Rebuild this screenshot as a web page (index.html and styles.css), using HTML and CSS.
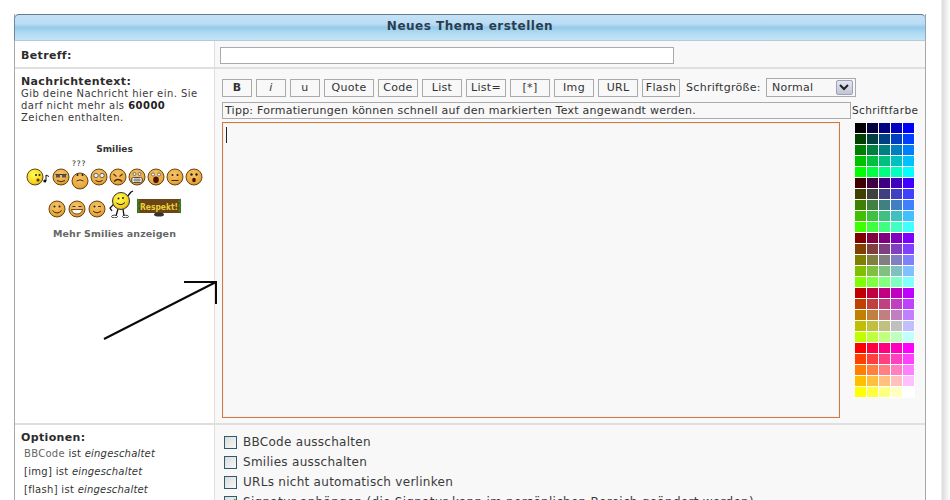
FILE: index.html
```html
<!DOCTYPE html>
<html lang="de">
<head>
<meta charset="utf-8">
<title>Neues Thema erstellen</title>
<link rel="stylesheet" href="styles.css">
</head>
<body>
<div class="page">
  <main class="panel">
    <h1 class="title">Neues Thema erstellen</h1>
    <section class="row row-subject">
      <div class="side"><strong class="label">Betreff:</strong></div>
      <div class="main main-subject"><input class="subject" type="text"></div>
    </section>
    <section class="row row-message">
      <div class="side">
        <strong class="label">Nachrichtentext:</strong>
        <p class="hint">Gib deine Nachricht hier ein. Sie darf nicht mehr als <b>60000</b> Zeichen enthalten.</p>
        <h2 class="smilies-title">Smilies</h2>
        <div class="smilies">
          <svg class="s s-wide" viewBox="0 0 25 18"><circle cx="9" cy="9" r="8" fill="url(#yl)" stroke="#5b4a10"/><circle cx="10" cy="7" r="1" fill="#222"/><circle cx="13.500" cy="7" r="1" fill="#222"/><circle cx="12" cy="12" r="1.500" fill="#4a3500"/><path d="M20 7v6" stroke="#111" stroke-width="1"/><path d="M20 7l3 1.500" stroke="#111"/><circle cx="18.800" cy="13" r="1.500" fill="#111"/></svg>
          <svg class="s" viewBox="0 0 18 18"><use href="#face"/><path d="M3.500 6.500h11" stroke="#333"/><rect x="4" y="6.500" width="4" height="3" fill="#555"/><rect x="10" y="6.500" width="4" height="3" fill="#555"/><path d="M5 12.500q4 2.500 8 0" stroke="#4a2b00" fill="none"/></svg>
          <svg class="s s-tall" viewBox="0 0 18 26"><text x="1" y="6" class="qm">???</text><g transform="translate(0 8)"><use href="#face"/><circle cx="6.500" cy="7" r="1" fill="#222"/><circle cx="11.500" cy="7" r="1" fill="#222"/><path d="M5.500 13q3.500-2.500 7 0" stroke="#4a2b00" fill="none"/></g></svg>
          <svg class="s" viewBox="0 0 18 18"><use href="#face"/><circle cx="6" cy="7.500" r="2.200" fill="#eee" stroke="#333" stroke-width=".7"/><circle cx="12" cy="7.500" r="2.200" fill="#eee" stroke="#333" stroke-width=".7"/><path d="M5.500 12.500q3.500 2.500 7 0" stroke="#4a2b00" fill="none"/></svg>
          <svg class="s" viewBox="0 0 18 18"><use href="#face"/><path d="M4.500 6l3 2.500M13.500 6l-3 2.500" stroke="#5a2f00" stroke-width="1.200"/><path d="M5 13.500q4-4 8 0" stroke="#4a2b00" fill="none" stroke-width="1.200"/></svg>
          <svg class="s" viewBox="0 0 18 18"><use href="#face"/><circle cx="6.500" cy="6" r="1.500" fill="#eee" stroke="#333" stroke-width=".6"/><circle cx="11.500" cy="6" r="1.500" fill="#eee" stroke="#333" stroke-width=".6"/><rect x="3.500" y="9.500" width="11" height="5" rx="2" fill="#fff" stroke="#333" stroke-width=".8"/><path d="M7 9.500v5M9 9.500v5M11 9.500v5M3.500 12h11" stroke="#333" stroke-width=".6"/></svg>
          <svg class="s" viewBox="0 0 18 18"><use href="#face"/><circle cx="6" cy="6.500" r="1.500" fill="#fff" stroke="#333" stroke-width=".6"/><circle cx="12" cy="6.500" r="1.500" fill="#fff" stroke="#333" stroke-width=".6"/><ellipse cx="9" cy="11.800" rx="2.800" ry="3.300" fill="#4a1500"/></svg>
          <svg class="s" viewBox="0 0 18 18"><use href="#face"/><circle cx="6.500" cy="7" r="1" fill="#222"/><circle cx="11.500" cy="7" r="1" fill="#222"/><path d="M5.500 12.500h7" stroke="#4a2b00"/></svg>
          <svg class="s" viewBox="0 0 18 18"><use href="#face"/><circle cx="6.500" cy="6.500" r="1.200" fill="#222"/><circle cx="11.500" cy="6.500" r="1.200" fill="#222"/><ellipse cx="9" cy="12" rx="1.800" ry="2.300" fill="#4a1500"/></svg>
        </div>
        <div class="smilies smilies-second">
          <svg class="s" viewBox="0 0 18 18"><use href="#face"/><circle cx="6.500" cy="6.500" r="1" fill="#222"/><circle cx="11.500" cy="6.500" r="1" fill="#222"/><path d="M4.500 10.500q4.500 5 9 0" stroke="#4a2b00" fill="none"/></svg>
          <svg class="s" viewBox="0 0 18 18"><use href="#face"/><path d="M4.500 6.500h3M10.500 6.500h3" stroke="#333"/><path d="M3.500 9.500h11q-1 4.500-5.500 4.500t-5.500-4.500z" fill="#fff" stroke="#4a2b00" stroke-width=".8"/></svg>
          <svg class="s" viewBox="0 0 18 18"><use href="#face"/><circle cx="6.500" cy="6.500" r="1" fill="#222"/><path d="M10 6.500h3" stroke="#333"/><path d="M5 11q4 3.500 8 0" stroke="#4a2b00" fill="none"/></svg>
          <svg class="dancer" viewBox="0 0 26 28"><path d="M7 13L2 18l2 3M19 7l4-5M23 2l2-1" stroke="#111" fill="none" stroke-width="1.300"/><path d="M10 19l-2 7M15 19l1 7" stroke="#111" stroke-width="1.300"/><ellipse cx="6.500" cy="26.500" rx="3" ry="1.300" fill="#fff" stroke="#111" stroke-width=".8"/><ellipse cx="17.500" cy="26.500" rx="3" ry="1.300" fill="#fff" stroke="#111" stroke-width=".8"/><circle cx="13" cy="11" r="8.500" fill="url(#yl)" stroke="#333"/><circle cx="10.500" cy="8.500" r="1" fill="#222"/><circle cx="15" cy="8" r="1" fill="#222"/><path d="M8.500 13q4.500 3.500 8.500-.5" stroke="#222" fill="none"/></svg>
          <svg class="sign" viewBox="0 0 44 19"><rect x="0" y="1" width="44" height="14" fill="#6b4516"/><path d="M0 1l2 2-2 2 2 3-2 2 2 3-2 2M44 1l-2 2 2 2-2 3 2 2-2 3 2 2" stroke="#2f8a2a" fill="none" stroke-width="1.500"/><ellipse cx="22" cy="16.500" rx="5" ry="2" fill="#333"/><text x="3" y="12" textLength="38" lengthAdjust="spacingAndGlyphs" class="respekt">Respekt!</text></svg>
        </div>
        <div class="more">Mehr Smilies anzeigen</div>
      </div>
      <div class="main main-message">
        <div class="toolbar">
          <button class="btn btn-b" type="button">B</button>
          <button class="btn btn-s btn-i" type="button">i</button>
          <button class="btn btn-s" type="button">u</button>
          <button class="btn btn-quote" type="button">Quote</button>
          <button class="btn" type="button">Code</button>
          <button class="btn" type="button">List</button>
          <button class="btn" type="button">List=</button>
          <button class="btn" type="button">[*]</button>
          <button class="btn" type="button">Img</button>
          <button class="btn" type="button">URL</button>
          <button class="btn btn-flash" type="button">Flash</button>
          <span class="size-label">Schriftgröße:</span>
          <div class="select"><span>Normal</span><span class="arrow"><svg viewBox="0 0 10 7" width="10" height="7"><path d="M1 1l4 4 4-4" fill="none" stroke="#222" stroke-width="2"/></svg></span></div>
        </div>
        <div class="tip-row">
          <div class="tip">Tipp: Formatierungen können schnell auf den markierten Text angewandt werden.</div>
          <span class="color-label">Schriftfarbe</span>
        </div>
        <div class="editor">
          <div class="textarea"><span class="caret"></span></div>
          <div class="palette">
            <span style="background:#000000"></span><span style="background:#000040"></span><span style="background:#000080"></span><span style="background:#0000c0"></span><span style="background:#0000ff"></span>
            <span style="background:#004000"></span><span style="background:#004040"></span><span style="background:#004080"></span><span style="background:#0040c0"></span><span style="background:#0040ff"></span>
            <span style="background:#008000"></span><span style="background:#008040"></span><span style="background:#008080"></span><span style="background:#0080c0"></span><span style="background:#0080ff"></span>
            <span style="background:#00c000"></span><span style="background:#00c040"></span><span style="background:#00c080"></span><span style="background:#00c0c0"></span><span style="background:#00c0ff"></span>
            <span style="background:#00ff00"></span><span style="background:#00ff40"></span><span style="background:#00ff80"></span><span style="background:#00ffc0"></span><span style="background:#00ffff"></span>
            <span style="background:#400000"></span><span style="background:#400040"></span><span style="background:#400080"></span><span style="background:#4000c0"></span><span style="background:#4000ff"></span>
            <span style="background:#404000"></span><span style="background:#404040"></span><span style="background:#404080"></span><span style="background:#4040c0"></span><span style="background:#4040ff"></span>
            <span style="background:#408000"></span><span style="background:#408040"></span><span style="background:#408080"></span><span style="background:#4080c0"></span><span style="background:#4080ff"></span>
            <span style="background:#40c000"></span><span style="background:#40c040"></span><span style="background:#40c080"></span><span style="background:#40c0c0"></span><span style="background:#40c0ff"></span>
            <span style="background:#40ff00"></span><span style="background:#40ff40"></span><span style="background:#40ff80"></span><span style="background:#40ffc0"></span><span style="background:#40ffff"></span>
            <span style="background:#800000"></span><span style="background:#800040"></span><span style="background:#800080"></span><span style="background:#8000c0"></span><span style="background:#8000ff"></span>
            <span style="background:#804000"></span><span style="background:#804040"></span><span style="background:#804080"></span><span style="background:#8040c0"></span><span style="background:#8040ff"></span>
            <span style="background:#808000"></span><span style="background:#808040"></span><span style="background:#808080"></span><span style="background:#8080c0"></span><span style="background:#8080ff"></span>
            <span style="background:#80c000"></span><span style="background:#80c040"></span><span style="background:#80c080"></span><span style="background:#80c0c0"></span><span style="background:#80c0ff"></span>
            <span style="background:#80ff00"></span><span style="background:#80ff40"></span><span style="background:#80ff80"></span><span style="background:#80ffc0"></span><span style="background:#80ffff"></span>
            <span style="background:#c00000"></span><span style="background:#c00040"></span><span style="background:#c00080"></span><span style="background:#c000c0"></span><span style="background:#c000ff"></span>
            <span style="background:#c04000"></span><span style="background:#c04040"></span><span style="background:#c04080"></span><span style="background:#c040c0"></span><span style="background:#c040ff"></span>
            <span style="background:#c08000"></span><span style="background:#c08040"></span><span style="background:#c08080"></span><span style="background:#c080c0"></span><span style="background:#c080ff"></span>
            <span style="background:#c0c000"></span><span style="background:#c0c040"></span><span style="background:#c0c080"></span><span style="background:#c0c0c0"></span><span style="background:#c0c0ff"></span>
            <span style="background:#c0ff00"></span><span style="background:#c0ff40"></span><span style="background:#c0ff80"></span><span style="background:#c0ffc0"></span><span style="background:#c0ffff"></span>
            <span style="background:#ff0000"></span><span style="background:#ff0040"></span><span style="background:#ff0080"></span><span style="background:#ff00c0"></span><span style="background:#ff00ff"></span>
            <span style="background:#ff4000"></span><span style="background:#ff4040"></span><span style="background:#ff4080"></span><span style="background:#ff40c0"></span><span style="background:#ff40ff"></span>
            <span style="background:#ff8000"></span><span style="background:#ff8040"></span><span style="background:#ff8080"></span><span style="background:#ff80c0"></span><span style="background:#ff80ff"></span>
            <span style="background:#ffc000"></span><span style="background:#ffc040"></span><span style="background:#ffc080"></span><span style="background:#ffc0c0"></span><span style="background:#ffc0ff"></span>
            <span style="background:#ffff00"></span><span style="background:#ffff40"></span><span style="background:#ffff80"></span><span style="background:#ffffc0"></span><span style="background:#ffffff"></span>
          </div>
        </div>
      </div>
      <svg class="pointer" viewBox="0 0 118 62" width="118" height="62"><path d="M2 59L114 2M82 2h33M114 1v23" fill="none" stroke="#0a0a0a" stroke-width="2"/></svg>
    </section>
    <section class="row row-options">
      <div class="side">
        <strong class="label">Optionen:</strong>
        <ul class="status">
          <li><span class="code">BBCode</span> ist <i>eingeschaltet</i></li>
          <li class="tag">[img] ist <i>eingeschaltet</i></li>
          <li class="tag">[flash] ist <i>eingeschaltet</i></li>
        </ul>
      </div>
      <div class="main main-options">
        <label class="opt"><input type="checkbox"> BBCode ausschalten</label>
        <label class="opt"><input type="checkbox"> Smilies ausschalten</label>
        <label class="opt"><input type="checkbox"> URLs nicht automatisch verlinken</label>
        <label class="opt"><input type="checkbox" checked> Signatur anhängen (die Signatur kann im persönlichen Bereich geändert werden)</label>
      </div>
    </section>
  </main>
</div>
<svg class="defs" width="0" height="0">
  <defs>
    <radialGradient id="yl" cx=".4" cy=".35" r=".75"><stop offset="0" stop-color="#ffff50"/><stop offset=".7" stop-color="#f5d020"/><stop offset="1" stop-color="#c09010"/></radialGradient>
    <radialGradient id="or" cx=".45" cy=".35" r=".75"><stop offset="0" stop-color="#f8c468"/><stop offset=".7" stop-color="#e6a840"/><stop offset="1" stop-color="#a87420"/></radialGradient>
    <symbol id="face" viewBox="0 0 18 18" overflow="visible"><circle cx="9" cy="9" r="8" fill="url(#or)" stroke="#6b4510"/></symbol>
  </defs>
</svg>
</body>
</html>
```

FILE: styles.css
```css
* { box-sizing: border-box; }
html, body { margin: 0; height: 500px; overflow: hidden; background: #fff; }
body { font-family: "DejaVu Sans", Verdana, sans-serif; color: #333; }

.page { padding: 14px 0 0 14px; width: 950px; height: 500px; overflow: hidden; position: relative; background: linear-gradient(90deg, #fff 0, #fff 941px, #dcdcdc 942px, #ececec 946px, #fff 950px); }

.panel { width: 912px; border-left: 1px solid #a8a8a8; border-right: 1px solid #a8a8a8; background: #fff; }
.title { margin: 0 -1px; height: 27px; font-size: 12px; line-height: 22px; font-weight: bold; letter-spacing: .5px; text-align: center; color: #2a3e50; border-top: 1px solid #5f7a96; border-radius: 5px 5px 0 0; background: linear-gradient(180deg, #c4e2f6 0, #bbdcf3 35%, #96cbea 50%, #b3dcf3 75%, #c2e5f6 100%); border-bottom: 1px solid #b8c8d4; border-left: 1px solid #6d88a2; border-right: 1px solid #8ea6ba; }

.row { display: grid; grid-template-columns: 200px 1fr; border-bottom: 2px solid #dfdfdf; position: relative; }
.row-subject { height: 28px; }
.row-message { height: 356px; }
.row-options { height: 90px; border-bottom: 0; }

.side { padding: 6px 6px 0 6px; background: #fff; border-right: 1px solid #dfdfdf; }
.main { background: #f8f8f8; }
.label { display: block; font-size: 11px; line-height: 13px; color: #2c2c2c; letter-spacing: .35px; }
.row-subject .side { padding-top: 8px; }
.main-subject { padding: 6px 0 0 5px; }
.subject { display: block; width: 454px; height: 17px; border: 1px solid #aaa; background: #fff; padding: 0; }

.hint { margin: 0; width: 182px; font-size: 10px; line-height: 12px; letter-spacing: .45px; color: #3a3a3a; }
.hint b { color: #222; }
.smilies-title { margin: 19px 0 0; font-size: 9px; line-height: 12px; text-align: center; color: #333; font-weight: bold; width: 187px; }
.smilies { display: flex; justify-content: center; align-items: flex-end; gap: 1px; height: 30px; margin-top: 1px; width: 187px; }
.smilies-second { gap: 2px; height: 28px; margin-top: 4px; width: 187px; }
.s { width: 18px; height: 18px; flex: none; overflow: visible; }
.s-wide { width: 25px; }
.s-tall { height: 26px; }
.qm { font: 7.500px "DejaVu Sans", sans-serif; letter-spacing: .8px; fill: #222; }
.dancer { width: 26px; height: 28px; flex: none; margin: 0 1px 0 0; }
.sign { width: 44px; height: 19px; flex: none; margin-bottom: 1px; }
.respekt { font: bold 8.500px "DejaVu Sans", sans-serif; fill: #e8d238; }
.more { margin-top: 10px; width: 187px; text-align: center; font-size: 9.500px; line-height: 12px; font-weight: bold; letter-spacing: .1px; color: #666; }

.main-message { padding: 9px 0 0 7px; }
.toolbar { display: flex; align-items: center; gap: 4px; height: 19px; }
.btn { width: 40px; height: 18px; padding: 0; border: 1px solid #aaa; background: #f8f8f8; font: 11px/16px "DejaVu Sans", sans-serif; color: #333; letter-spacing: .3px; }
.btn-b, .btn-s { width: 30px; }
.btn-b { font-weight: bold; }
.btn-i { font-style: italic; }
.btn-quote { width: 50px; }
.btn-flash { width: 38px; }
.size-label { font-size: 11px; letter-spacing: .3px; margin-left: 2px; color: #333; white-space: nowrap; }
.select { display: flex; align-items: center; justify-content: space-between; width: 90px; height: 19px; margin-left: 1px; border: 1px solid #aaa; background: #f8f8f8; padding: 0 2px 0 5px; font-size: 11px; letter-spacing: .3px; }
.arrow { display: flex; align-items: center; justify-content: center; width: 17px; height: 15px; border: 1px solid #9aa3b8; border-radius: 2px; background: linear-gradient(180deg, #e4e6f0, #c0c4d6); }

.tip-row { display: flex; align-items: center; margin-top: 4px; height: 18px; }
.tip { width: 629px; height: 17px; border: 1px solid #aaa; background: #f8f8f8; padding: 0 2px; font-size: 11px; line-height: 15px; letter-spacing: .24px; white-space: nowrap; color: #333; }
.color-label { margin-left: 1px; font-size: 10.500px; letter-spacing: .4px; line-height: 16px; white-space: nowrap; color: #333; }

.editor { display: flex; margin-top: 3px; }
.textarea { position: relative; width: 618px; height: 296px; border: 1px solid #c87a48; background: #f8f8f8; box-shadow: inset 0 0 0 1px #fbeee4; }
.caret { position: absolute; left: 3px; top: 4px; width: 1px; height: 16px; background: #222; }
.palette { display: grid; grid-template-columns: repeat(5, 12px); grid-auto-rows: 11px; margin: 1px 0 0 15px; align-self: flex-start; background: #fff; }
.palette span { border-right: 1px solid #fff; border-bottom: 1px solid #fff; }

.pointer { position: absolute; left: 87px; top: 211px; pointer-events: none; }

.main-options { padding: 7px 0 0 9px; display: flex; flex-direction: column; }
.opt { display: flex; align-items: center; gap: 6px; height: 20px; flex: none; font-size: 12px; letter-spacing: .28px; color: #3a3a3a; white-space: nowrap; }
.opt input { appearance: none; -webkit-appearance: none; margin: 0; width: 13px; height: 13px; flex: none; border: 1px solid #2f5a72; background: linear-gradient(135deg, #d8dcd8, #f8f8f6); position: relative; }
.opt input:checked::after { content: ""; position: absolute; left: 3px; top: 0; width: 4px; height: 7px; border-right: 2px solid #21a121; border-bottom: 2px solid #21a121; transform: rotate(40deg); }

.status { list-style: none; margin: 1px 0 0 3px; padding: 0; font-size: 10px; color: #333; }
.status li { height: 18px; line-height: 18px; letter-spacing: .3px; white-space: nowrap; }
.status .code { color: #666; }
.status i { letter-spacing: .2px; }
.row-options .side { padding-top: 6px; }
.defs { position: absolute; }
```
